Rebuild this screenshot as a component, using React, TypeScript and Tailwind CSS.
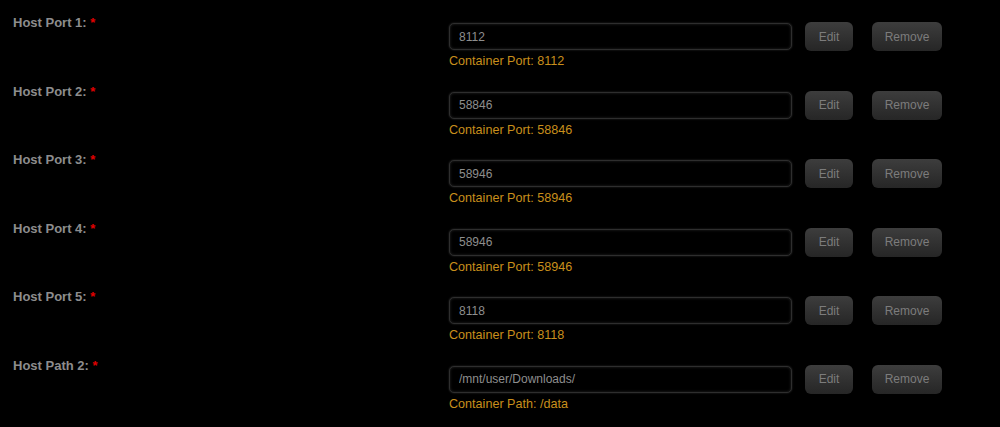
import React from "react";

const rows = [
  { label: "Host Port 1:", value: "8112", sub: "Container Port: 8112" },
  { label: "Host Port 2:", value: "58846", sub: "Container Port: 58846" },
  { label: "Host Port 3:", value: "58946", sub: "Container Port: 58946" },
  { label: "Host Port 4:", value: "58946", sub: "Container Port: 58946" },
  { label: "Host Port 5:", value: "8118", sub: "Container Port: 8118" },
  { label: "Host Path 2:", value: "/mnt/user/Downloads/", sub: "Container Path: /data" },
];

function Btn({ children, w }: { children: React.ReactNode; w: string }) {
  return (
    <button
      className={`${w} h-[29px] rounded-[6px] bg-gradient-to-b from-[#3d3d3d] to-[#262626] text-[12px] text-[#7c7c7c] shadow-[0_1px_2px_rgba(0,0,0,0.6)]`}
    >
      {children}
    </button>
  );
}

export default function App() {
  return (
    <div
      className="w-[1000px] h-[427px] bg-black overflow-hidden"
      style={{ fontFamily: '"Liberation Sans", Arial, sans-serif' }}
    >
      {rows.map((r) => (
        <div key={r.label} className="flex h-[68.5px]">
          <div className="w-[449px] pl-[13px] pt-[15px] text-[13px] font-bold leading-[16px] text-[#8d8d8d]">
            {r.label} <span className="text-[#e00000]">*</span>
          </div>
          <div className="pt-[22px]">
            <div className="flex items-center">
              <input
                readOnly
                defaultValue={r.value}
                className="w-[343px] h-[27px] rounded-[5px] border border-[#2e2e2e] bg-black px-[9px] text-[12px] text-[#8e8e8e] outline-none shadow-[inset_0_0_3px_rgba(110,110,110,0.35),0_0_2px_rgba(80,80,80,0.6)]"
                style={{ fontFamily: '"Liberation Sans", Arial, sans-serif' }}
              />
              <div className="ml-[13px]">
                <Btn w="w-[48px]">Edit</Btn>
              </div>
              <div className="ml-[19px]">
                <Btn w="w-[70px]">Remove</Btn>
              </div>
            </div>
            <div className="mt-[2px] text-[12.6px] leading-[16px] text-[#c88f1c]">
              {r.sub}
            </div>
          </div>
        </div>
      ))}
    </div>
  );
}
